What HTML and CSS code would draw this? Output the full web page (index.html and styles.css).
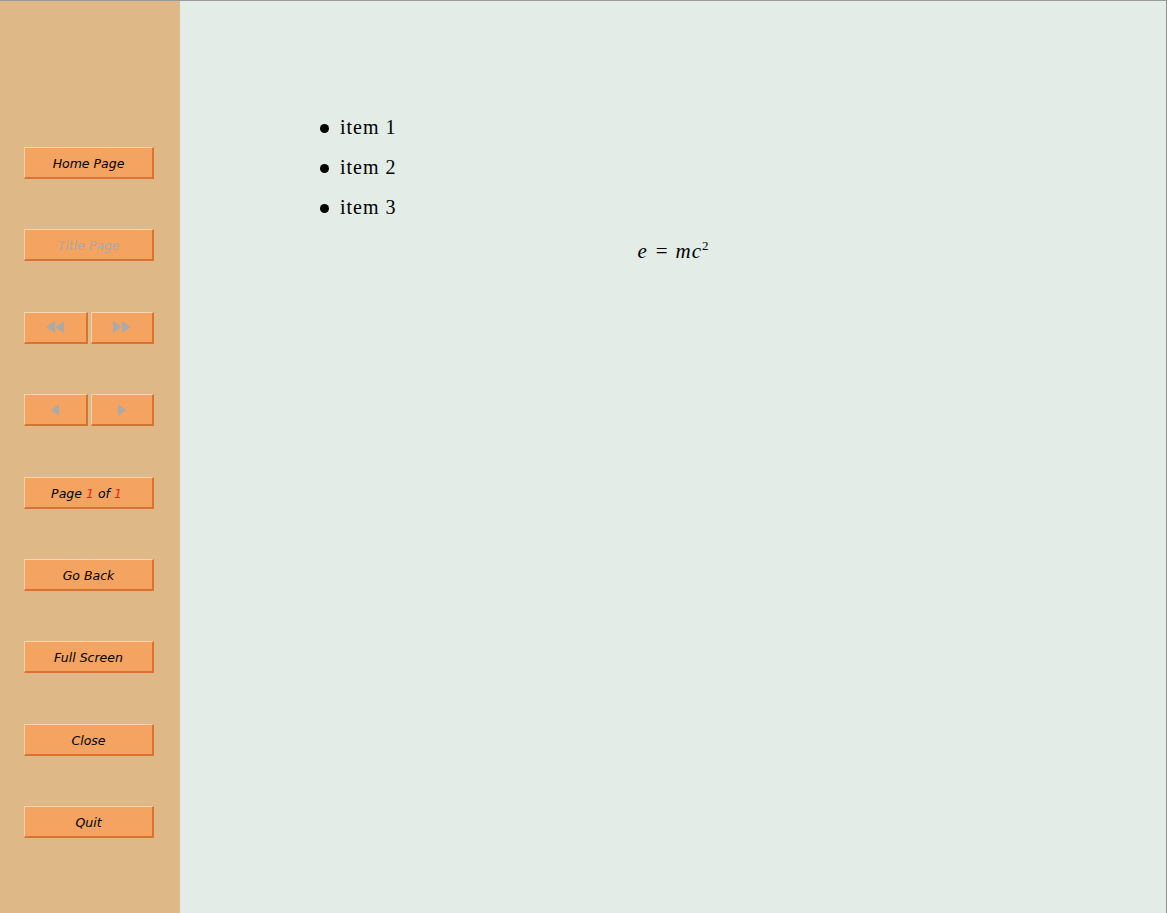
FILE: index.html
```html
<!DOCTYPE html>
<html>
<head>
<meta charset="utf-8">
<link rel="stylesheet" href="styles.css">
</head>
<body>
<div class="frame">
  <nav class="sidebar">
    <div class="btn">Home Page</div>
    <div class="btn disabled">Title Page</div>
    <div class="pair">
      <div class="btn half"><svg width="18" height="12" viewBox="0 0 18 12"><polygon points="9,0 9,12 0,6" fill="#aaa"/><polygon points="18,0 18,12 9,6" fill="#aaa"/></svg></div>
      <div class="btn half"><svg width="18" height="12" viewBox="0 0 18 12"><polygon points="0,0 0,12 9,6" fill="#aaa"/><polygon points="9,0 9,12 18,6" fill="#aaa"/></svg></div>
    </div>
    <div class="pair">
      <div class="btn half"><svg width="8" height="12" viewBox="0 0 8 12"><polygon points="8,0 8,12 0,6" fill="#aaa"/></svg></div>
      <div class="btn half"><svg width="8" height="12" viewBox="0 0 8 12"><polygon points="0,0 0,12 8,6" fill="#aaa"/></svg></div>
    </div>
    <div class="btn">Page <span class="red">1</span> of <span class="red">1</span></div>
    <div class="btn">Go Back</div>
    <div class="btn">Full Screen</div>
    <div class="btn">Close</div>
    <div class="btn">Quit</div>
  </nav>
  <main class="content">
    <ul class="items">
      <li>item 1</li>
      <li>item 2</li>
      <li>item 3</li>
    </ul>
    <div class="eq"><i>e</i><span class="op">=</span><i>mc</i><sup>2</sup></div>
  </main>
</div>
</body>
</html>
```
FILE: styles.css
```css
html, body {
  margin: 0;
  padding: 0;
  height: 100%;
}
body {
  background: #e3ece7;
}
.frame {
  display: flex;
  height: 913px;
  box-sizing: border-box;
  border-top: 1px solid #9a9a9a;
  border-right: 1px solid #8e938f;
}
.sidebar {
  width: 180px;
  flex: none;
  background: #dfb887;
  box-sizing: border-box;
  padding: 146px 0 0 24px;
  display: flex;
  flex-direction: column;
  gap: 50.4px;
}
.btn {
  width: 130px;
  height: 32px;
  flex: none;
  box-sizing: border-box;
  background: #f4a460;
  border-top: 1px solid #f8d6b4;
  border-left: 1px solid #f8d0a8;
  border-bottom: 2px solid #da7330;
  border-right: 2px solid #da7330;
  display: flex;
  align-items: center;
  justify-content: center;
  font-family: "DejaVu Sans", sans-serif;
  font-style: italic;
  font-size: 12.5px;
  color: #000;
  padding-top: 2px;
}
.btn.disabled {
  color: #aaa;
}
.red {
  color: #ff1a1a;
  margin: 0 4px;
}
.pair {
  display: flex;
  gap: 3px;
  width: 130px;
  flex: none;
}
.btn.half {
  width: auto;
  flex: 1 1 0;
  padding-top: 0;
}
.content {
  flex: 1;
  font-family: "Liberation Serif", serif;
  font-size: 20px;
  color: #000;
}
.items {
  list-style: none;
  margin: 111px 0 0 140px;
  padding: 0;
}
.items li {
  height: 40px;
  line-height: 30px;
  position: relative;
  padding-left: 20px;
  letter-spacing: 1px;
}
.items li::before {
  content: "";
  position: absolute;
  left: 0;
  top: 12px;
  width: 9px;
  height: 9px;
  border-radius: 50%;
  background: #000;
}
.eq {
  text-align: center;
  margin-top: 4px;
  font-size: 21px;
  line-height: 30px;
}
.eq i {
  font-style: italic;
  letter-spacing: 1px;
}
.eq .op {
  margin: 0 8px;
}
.eq sup {
  font-size: 13px;
  vertical-align: 8px;
  line-height: 0;
}
```
